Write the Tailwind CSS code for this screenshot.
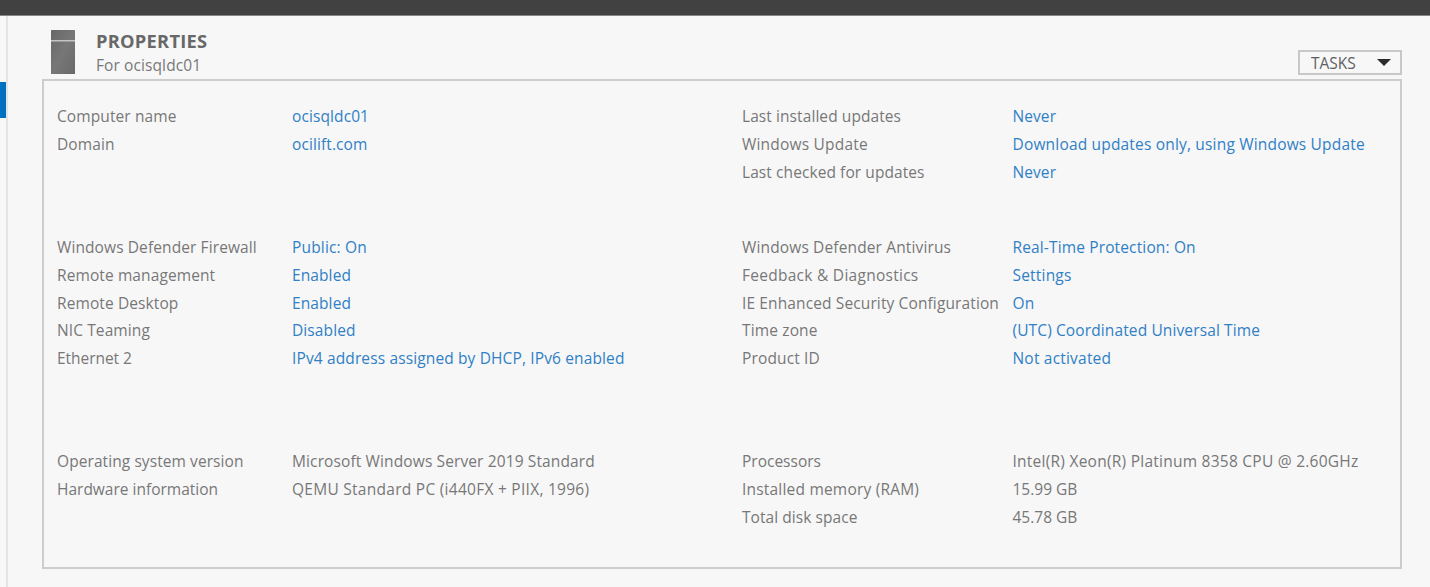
<!DOCTYPE html>
<html lang="en">
<head>
<meta charset="utf-8">
<title>Properties</title>
<script src="https://cdn.jsdelivr.net/npm/@tailwindcss/browser@4"></script>
</head>
<body class="h-[587px] w-[1430px] overflow-hidden bg-[#f7f7f7] font-['Open_Sans','Noto_Sans',sans-serif] text-[15.5px] text-[#777]">
<div class="flex h-full flex-col">
  <header class="h-4 shrink-0 border-b border-[#858585] bg-[#414141]"></header>
  <div class="flex flex-1">
    <aside class="w-2 shrink-0 border-r-2 border-[#e4e4e4] pt-[66px]">
      <div class="h-9 w-1.5 bg-[#0070c0]"></div>
    </aside>
    <main class="ml-[34px] w-[1360px]">
      <div class="flex h-[63px] items-start">
        <svg class="mt-3.5 ml-[9px] h-11 w-6" viewBox="0 0 24 44">
          <defs><linearGradient id="tower" x1="0" y1="0" x2="1" y2="1"><stop stop-color="#686868"/><stop offset=".5" stop-color="#777"/><stop offset="1" stop-color="#696969"/></linearGradient></defs>
          <rect width="24" height="44" rx="0.5" fill="url(#tower)"/><rect y="10" width="24" height="1.5" fill="#c4c4c4"/>
        </svg>
        <div class="ml-[21px] flex-1 pt-3.5">
          <h1 class="h-[23px] text-[18.3px] leading-[21px] font-bold tracking-[0.25px] whitespace-nowrap text-[#686868]">PROPERTIES</h1>
          <p class="h-[23px] leading-[24px] tracking-[0.1px] whitespace-nowrap">For ocisqldc01</p>
        </div>
        <button class="mt-[34px] flex h-[25px] w-[104px] items-center border-2 border-[#c8c8c8] pl-[11px] text-[#606060]"><span class="pt-[2px]">TASKS</span>
          <svg class="ml-auto mr-[9px] h-[7px] w-[14px]" viewBox="0 0 14 7"><path d="M0 0H14L7 7Z" fill="#2c2c2c"/></svg>
        </button>
      </div>
      <section class="h-[490px] border-2 border-[#cccccc] pt-[22.3px] pl-[13px] whitespace-nowrap leading-[27.67px]">
        <div class="grid h-[131px] grid-cols-[685px_1fr] items-start">
          <dl class="grid grid-cols-[235px_1fr] tracking-[0.1px] [&>dd]:text-[#3080c6]">
            <dt>Computer name</dt><dd>ocisqldc01</dd>
            <dt>Domain</dt><dd>ocilift.com</dd>
          </dl>
          <dl class="grid grid-cols-[270.5px_1fr] tracking-[0.08px] [&>dd]:text-[#3080c6]">
            <dt>Last installed updates</dt><dd>Never</dd>
            <dt class="tracking-[0.2px]">Windows Update</dt><dd class="tracking-[0.18px]">Download updates only, using Windows Update</dd>
            <dt>Last checked for updates</dt><dd>Never</dd>
          </dl>
        </div>
        <div class="grid h-[214px] grid-cols-[685px_1fr] items-start">
          <dl class="grid grid-cols-[235px_1fr] tracking-[0.1px] [&>dd]:text-[#3080c6]">
            <dt>Windows Defender Firewall</dt><dd class="tracking-[0.17px]">Public: On</dd>
            <dt>Remote management</dt><dd>Enabled</dd>
            <dt>Remote Desktop</dt><dd>Enabled</dd>
            <dt>NIC Teaming</dt><dd>Disabled</dd>
            <dt class="tracking-[-0.05px]">Ethernet 2</dt><dd class="tracking-[0.13px]">IPv4 address assigned by DHCP, IPv6 enabled</dd>
          </dl>
          <dl class="grid grid-cols-[270.5px_1fr] tracking-[0.14px] [&>dd]:text-[#3080c6]">
            <dt>Windows Defender Antivirus</dt><dd>Real-Time Protection: On</dd>
            <dt class="tracking-[0.27px]">Feedback &amp; Diagnostics</dt><dd class="tracking-[0.2px]">Settings</dd>
            <dt class="tracking-[0.12px]">IE Enhanced Security Configuration</dt><dd>On</dd>
            <dt>Time zone</dt><dd class="tracking-[0.12px]">(UTC) Coordinated Universal Time</dd>
            <dt>Product ID</dt><dd class="tracking-[0.2px]">Not activated</dd>
          </dl>
        </div>
        <div class="grid grid-cols-[685px_1fr] items-start">
          <dl class="grid grid-cols-[235px_1fr]">
            <dt class="tracking-[0.08px]">Operating system version</dt><dd class="tracking-[0.12px]">Microsoft Windows Server 2019 Standard</dd>
            <dt>Hardware information</dt><dd class="tracking-[0.27px]">QEMU Standard PC (i440FX + PIIX, 1996)</dd>
          </dl>
          <dl class="grid grid-cols-[270.5px_1fr]">
            <dt>Processors</dt><dd class="tracking-[0.25px]">Intel(R) Xeon(R) Platinum 8358 CPU @ 2.60GHz</dd>
            <dt class="tracking-[0.2px]">Installed memory (RAM)</dt><dd>15.99 GB</dd>
            <dt class="tracking-[0.06px]">Total disk space</dt><dd>45.78 GB</dd>
          </dl>
        </div>
      </section>
    </main>
  </div>
</div>
</body>
</html>
